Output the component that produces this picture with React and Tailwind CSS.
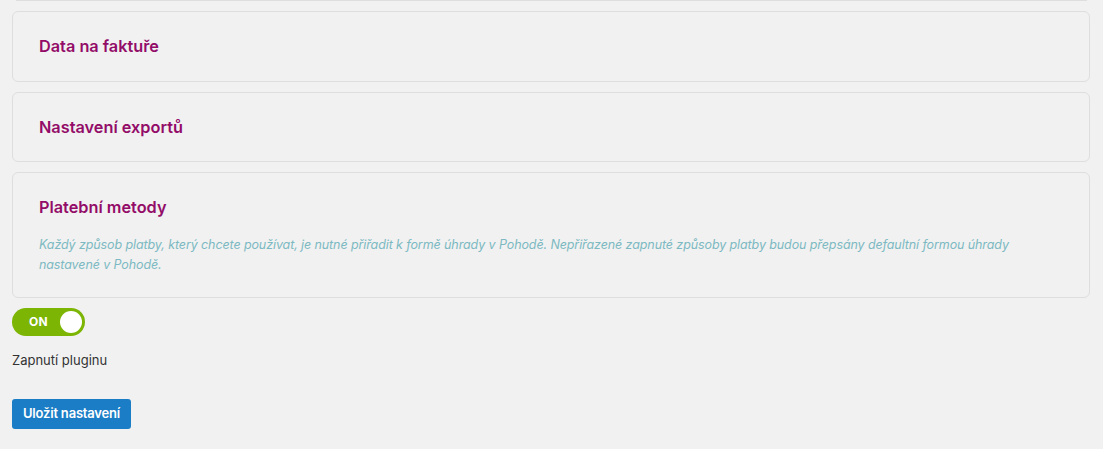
import React, { useState } from 'react';

const Section = ({ title, children }) => (
    <div className="rounded-[6px] border border-[#dedede] bg-[#f1f1f1] px-[26px] py-[22px]">
        <h2 className="text-[16.3px] leading-[24.5px] font-semibold text-[#930c68]">{title}</h2>
        {children}
    </div>
);

const Toggle = ({ on, onChange }) => (
    <button
        type="button"
        onClick={() => onChange(!on)}
        className="flex h-[28px] w-[73px] items-center justify-between rounded-full bg-[#7cb503] pl-[17px] pr-[3px]"
    >
        <span className="text-[12px] font-bold tracking-wide text-white">ON</span>
        <span className="h-[22px] w-[22px] rounded-full bg-white"></span>
    </button>
);

export default function App() {
    const [enabled, setEnabled] = useState(true);

    return (
        <div
            className="min-h-[449px] w-full bg-[#f1f1f1] px-[12px] text-[#333]"
            style={{ fontFamily: 'Inter, "Noto Sans", sans-serif' }}
        >
            {/* bottom edge of the section above */}
            <div className="mx-[4px] h-[1px] bg-[#dedede]"></div>

            <div className="mt-[10px] w-[1078px] flex flex-col gap-[10px]">
                <Section title="Data na faktuře" />
                <Section title="Nastavení exportů" />
                <Section title="Platební metody">
                    <p className="mt-[15.5px] text-[12.5px] italic leading-[20px] tracking-[-0.1px] text-[#7cb9c2]">
                        Každý způsob platby, který chcete používat, je nutné přiřadit k formě úhrady v Pohodě. Nepřiřazené zapnuté způsoby platby budou přepsány defaultní formou úhrady nastavené v Pohodě.
                    </p>
                </Section>
            </div>

            <div className="mt-[10px]">
                <Toggle on={enabled} onChange={setEnabled} />
            </div>

            <p className="mt-[14px] text-[13px] leading-[20px] text-[#333]">Zapnutí pluginu</p>

            <button
                type="button"
                className="mt-[29px] h-[30px] rounded-[3px] bg-[#1a7dc5] px-[11px] text-[13px] font-semibold tracking-[-0.2px] text-white"
            >
                Uložit nastavení
            </button>
        </div>
    );
}
